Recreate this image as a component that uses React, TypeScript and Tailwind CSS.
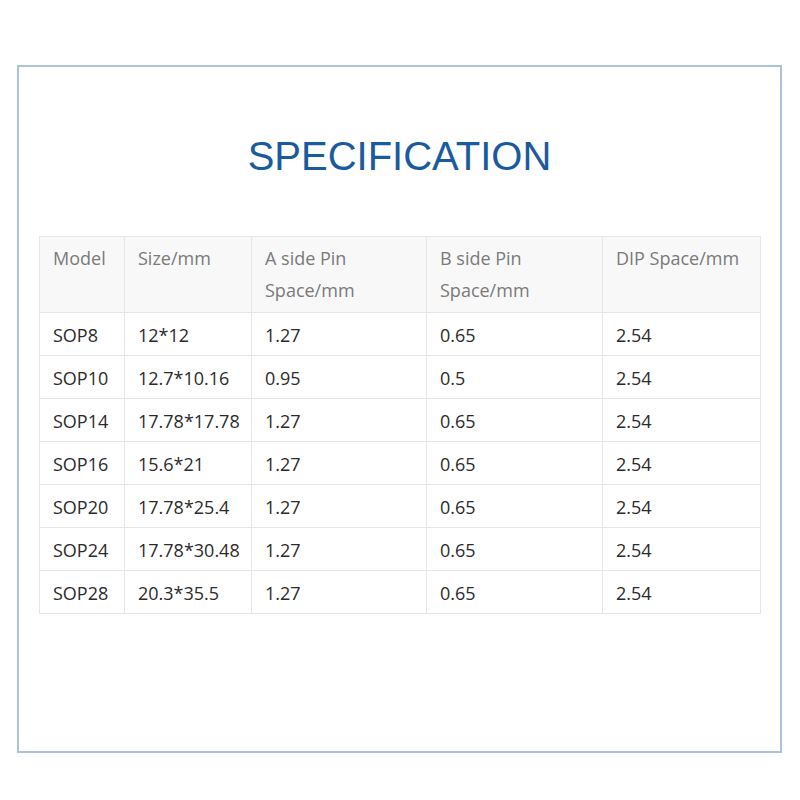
import React from "react";

const rows = [
  ["SOP8", "12*12", "1.27", "0.65", "2.54"],
  ["SOP10", "12.7*10.16", "0.95", "0.5", "2.54"],
  ["SOP14", "17.78*17.78", "1.27", "0.65", "2.54"],
  ["SOP16", "15.6*21", "1.27", "0.65", "2.54"],
  ["SOP20", "17.78*25.4", "1.27", "0.65", "2.54"],
  ["SOP24", "17.78*30.48", "1.27", "0.65", "2.54"],
  ["SOP28", "20.3*35.5", "1.27", "0.65", "2.54"],
];

const headers = ["Model", "Size/mm", "A side Pin\nSpace/mm", "B side Pin\nSpace/mm", "DIP Space/mm"];
const widths = ["w-[85px]", "w-[127px]", "w-[175px]", "w-[176px]", "w-[158px]"];

export default function App() {
  return (
    <div className="w-[800px] h-[800px] bg-white pt-[65px] pl-[17px]">
      <div className="w-[765px] h-[688px] border-2 border-[#a9c3dc] flex flex-col items-center">
        <h1
          className="mt-[65px] text-[40px] leading-[48px] text-[#1a5a9e]"
          style={{ fontFamily: '"Liberation Sans", Arial, sans-serif' }}
        >
          SPECIFICATION
        </h1>
        <table
          className="mt-[56px] ml-[1px] border-collapse text-[18px] leading-[32px]"
          style={{ fontFamily: '"Open Sans", sans-serif' }}
        >
          <thead>
            <tr className="bg-[#f8f8f8]">
              {headers.map((h, i) => (
                <th
                  key={i}
                  className={`${widths[i]} h-[76px] border border-[#e6e6e6] align-top text-left font-normal text-[#7a7a7a] pl-[13px] pr-2 pt-[5px] whitespace-pre-line`}
                >
                  {h}
                </th>
              ))}
            </tr>
          </thead>
          <tbody>
            {rows.map((r, ri) => (
              <tr key={ri}>
                {r.map((c, ci) => (
                  <td
                    key={ci}
                    className="h-[43px] border border-[#e6e6e6] text-left text-[#2b2b2b] pl-[13px] pr-2 pt-[1px] align-middle"
                  >
                    {c}
                  </td>
                ))}
              </tr>
            ))}
          </tbody>
        </table>
      </div>
    </div>
  );
}
